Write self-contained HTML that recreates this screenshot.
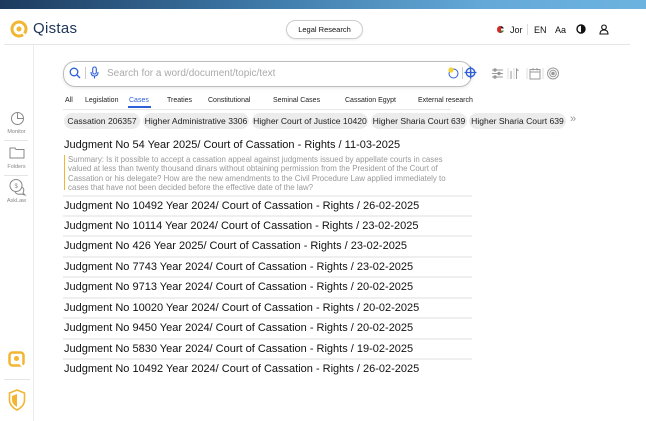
<!DOCTYPE html>
<html><head><meta charset="utf-8"><style>
*{margin:0;padding:0;box-sizing:border-box}
body{width:646px;height:421px;background:#fff;font-family:"Liberation Sans",sans-serif;position:relative;overflow:hidden;color:#111}
.abs{position:absolute}
.topbar{left:0;top:0;width:646px;height:9px;background:linear-gradient(90deg,#1d3a5e 0%,#3e79a8 40%,#64a9d8 75%,#6db3e0 100%)}
.hline{left:4px;top:44px;width:626px;height:1px;background:#e6e6e6}
.vline{left:33px;top:45px;width:1px;height:376px;background:#ececec}
.logo{left:10px;top:20px}
.brand{left:33px;top:20px;font-size:15px;color:#1d3557;letter-spacing:.3px}
.lr{left:286px;top:20px;width:77px;height:19px;border:1px solid #ccc;border-radius:10px;font-size:7.5px;text-align:center;line-height:17px;box-shadow:0 1px 2px rgba(0,0,0,.08)}
.hr{top:25px;font-size:9px}
.search{left:63px;top:61px;width:409px;height:26px;border:1px solid #bdbdbd;border-radius:12px;box-shadow:0 1px 3px rgba(0,0,0,.1)}
.ph{left:107px;top:68px;font-size:10px;color:#aaa}
.tabs{top:97px;font-size:7px;color:#222}
.tabline{left:63px;top:109px;width:388px;height:1px;background:#e8e8e8}
.chip{top:113px;height:16px;border-radius:8px;background:#ececec;font-size:8.6px;line-height:16px;text-align:center;color:#222;white-space:nowrap;overflow:hidden}
.t{left:64px;font-size:11px;color:#111;white-space:nowrap}
.sep{left:63px;width:409px;height:2px;background:#efefef}
.sum{left:68px;top:155px;width:378px;font-size:7.9px;line-height:9.4px;color:#999}
.side{font-size:5.5px;color:#888;text-align:center;width:33px;left:0}
</style></head><body>
<div class="abs topbar"></div>
<svg class="abs logo" width="18" height="18" viewBox="0 0 18 18"><circle cx="9" cy="9" r="7" fill="none" stroke="#f2b632" stroke-width="3"/><circle cx="9" cy="9" r="2.5" fill="#f2b632"/><path d="M13 13 L16 17" stroke="#fff" stroke-width="2"/></svg>
<div class="abs brand">Qistas</div>
<div class="abs lr">Legal Research</div>
<div class="abs" style="left:497px;top:26px;width:7px;height:7px;border-radius:50%;background:linear-gradient(#222 33%,#fff 33% 66%,#2a8a3a 66%)"><div style="width:4px;height:7px;background:#d62828;border-radius:4px 0 0 4px"></div></div>
<div class="abs hr" style="left:510px">Jor</div>
<div class="abs" style="left:527px;top:24px;width:1px;height:11px;background:#ddd"></div>
<div class="abs hr" style="left:534px">EN</div>
<div class="abs hr" style="left:555px">Aa</div>
<svg class="abs" style="left:576px;top:24px" width="10" height="10" viewBox="0 0 10 10"><circle cx="5" cy="5" r="4" fill="none" stroke="#111" stroke-width="1.4"/><path d="M5 1 A4 4 0 0 1 5 9Z" fill="#111"/></svg>
<svg class="abs" style="left:599px;top:24px" width="10" height="11" viewBox="0 0 10 11"><circle cx="5" cy="3.3" r="2.3" fill="none" stroke="#111" stroke-width="1.1"/><path d="M1 10 Q1 6 5 6 Q9 6 9 10Z" fill="none" stroke="#111" stroke-width="1.1"/></svg>
<div class="abs hline"></div>
<div class="abs vline"></div>

<svg class="abs" style="left:10px;top:111px" width="15" height="15" viewBox="0 0 15 15"><circle cx="7.5" cy="7.5" r="6" fill="none" stroke="#888" stroke-width="1"/><path d="M7.5 1.5V7.5H13.5" fill="none" stroke="#888" stroke-width="1"/></svg>
<div class="abs side" style="top:129px">Monitor</div>
<div class="abs" style="left:4px;top:140px;width:24px;height:1px;background:#e5e5e5"></div>
<svg class="abs" style="left:9px;top:146px" width="16" height="13" viewBox="0 0 16 13"><path d="M1 2H6L7 3.5H15V12H1Z" fill="none" stroke="#888" stroke-width="1"/></svg>
<div class="abs side" style="top:164px">Folders</div>
<div class="abs" style="left:4px;top:175px;width:24px;height:1px;background:#e5e5e5"></div>
<svg class="abs" style="left:8px;top:178px" width="19" height="18" viewBox="0 0 19 18"><circle cx="8" cy="7.5" r="6" fill="none" stroke="#888"/><path d="M14 9 Q17 11 15 15 L17 17 L13 16 Q9 17 7 14" fill="none" stroke="#888"/><text x="6.5" y="10" font-size="6" fill="#888">$</text></svg>
<div class="abs side" style="top:198px">AskLaw</div>
<svg class="abs" style="left:8px;top:351px" width="17" height="16" viewBox="0 0 17 16"><rect x="1.5" y="1.5" width="14" height="13" rx="3" fill="none" stroke="#f2b632" stroke-width="2.5"/><circle cx="8.5" cy="7.5" r="2.5" fill="#f2b632"/><path d="M12 13L15 15" stroke="#fff" stroke-width="2"/></svg>
<div class="abs" style="left:4px;top:379px;width:26px;height:1px;background:#e5e5e5"></div>
<svg class="abs" style="left:8px;top:389px" width="18" height="22" viewBox="0 0 18 22"><path d="M9 1 L16.5 4 V11 Q16.5 17 9 21 Q1.5 17 1.5 11 V4Z" fill="none" stroke="#f2b632" stroke-width="1.6"/><path d="M9 5 V18 Q4 15 4 11 V7Z" fill="#f2b632"/></svg>

<div class="abs search"></div>
<svg class="abs" style="left:69px;top:67px" width="12" height="12" viewBox="0 0 12 12"><circle cx="5" cy="5" r="3.8" fill="none" stroke="#2d5fd8" stroke-width="1.3"/><path d="M8 8L11 11" stroke="#2d5fd8" stroke-width="1.3"/></svg>
<div class="abs" style="left:85px;top:67px;width:1px;height:12px;background:#ccc"></div>
<svg class="abs" style="left:90px;top:66px" width="9" height="13" viewBox="0 0 9 13"><rect x="2.7" y="1" width="3.6" height="7" rx="1.8" fill="none" stroke="#2d5fd8" stroke-width="1.1"/><path d="M1 6Q1 10 4.5 10Q8 10 8 6M4.5 10V12.5" fill="none" stroke="#2d5fd8" stroke-width="1.1"/></svg>
<div class="abs ph">Search for a word/document/topic/text</div>
<svg class="abs" style="left:447px;top:66px" width="13" height="14" viewBox="0 0 13 14"><circle cx="6.5" cy="7.5" r="4.5" fill="none" stroke="#2d5fd8" stroke-width="1"/><circle cx="4" cy="4" r="2.6" fill="#f6d232"/></svg>
<div class="abs" style="left:462px;top:67px;width:1px;height:12px;background:#ccc"></div>
<svg class="abs" style="left:464px;top:66px" width="13" height="13" viewBox="0 0 13 13"><circle cx="6.5" cy="6.5" r="4.3" fill="none" stroke="#2d5fd8" stroke-width="1.4"/><path d="M6.5 0.5V12.5M0.5 6.5H12.5" stroke="#2d5fd8" stroke-width="1.2"/></svg>
<svg class="abs" style="left:491px;top:67px" width="75" height="13" viewBox="0 0 75 13" stroke="#999" fill="none" stroke-width="1"><path d="M1 3H12M1 6.5H12M1 10H12"/><circle cx="4" cy="3" r="1.2" fill="#999"/><circle cx="8" cy="6.5" r="1.2" fill="#999"/><circle cx="4" cy="10" r="1.2" fill="#999"/><path d="M17 1V12M23 1V12" stroke="#ddd"/><path d="M20 4V12M25.5 12V2L27.5 4" /><path d="M36 1V12" stroke="#ddd"/><rect x="39" y="2.5" width="10" height="9.5"/><path d="M39 5H49M42 1V3.5M46 1V3.5"/><path d="M52 1V12" stroke="#ddd"/><circle cx="62" cy="6.5" r="5.5"/><circle cx="62" cy="6.5" r="3.3"/><circle cx="62" cy="6.5" r="1.3" fill="#999"/></svg>

<div class="abs tabs" style="left:65px">All</div>
<div class="abs tabs" style="left:85px">Legislation</div>
<div class="abs tabs" style="left:129px;color:#2d5fd8">Cases</div>
<div class="abs" style="left:128px;top:106px;width:23px;height:1.5px;background:#2d5fd8"></div>
<div class="abs tabs" style="left:167px">Treaties</div>
<div class="abs tabs" style="left:208px">Constitutional</div>
<div class="abs tabs" style="left:273px">Seminal Cases</div>
<div class="abs tabs" style="left:345px">Cassation Egypt</div>
<div class="abs tabs" style="left:418px">External research</div>
<div class="abs tabline"></div>

<div class="abs chip" style="left:64px;width:76px">Cassation 206357</div>
<div class="abs chip" style="left:143px;width:106px">Higher Administrative 3306</div>
<div class="abs chip" style="left:252px;width:116px">Higher Court of Justice 10420</div>
<div class="abs chip" style="left:371px;width:96px">Higher Sharia Court 639</div>
<div class="abs chip" style="left:469px;width:97px">Higher Sharia Court 639</div>
<div class="abs" style="left:570px;top:113px;font-size:11px;color:#999">»</div>

<div class="abs t" style="top:139px">Judgment No 54 Year 2025/ Court of Cassation - Rights / 11-03-2025</div>
<div class="abs" style="left:64px;top:155px;width:1px;height:35px;background:#f2b632"></div>
<div class="abs sum">Summary: Is it possible to accept a cassation appeal against judgments issued by appellate courts in cases<br>valued at less than twenty thousand dinars without obtaining permission from the President of the Court of<br>Cassation or his delegate? How are the new amendments to the Civil Procedure Law applied immediately to<br>cases that have not been decided before the effective date of the law?</div>
<div class="abs sep" style="top:195px"></div>
<div class="abs t" style="top:200px">Judgment No 10492 Year 2024/ Court of Cassation - Rights / 26-02-2025</div>
<div class="abs sep" style="top:215px"></div>
<div class="abs t" style="top:220px">Judgment No 10114 Year 2024/ Court of Cassation - Rights / 23-02-2025</div>
<div class="abs sep" style="top:235px"></div>
<div class="abs t" style="top:240px">Judgment No 426 Year 2025/ Court of Cassation - Rights / 23-02-2025</div>
<div class="abs sep" style="top:256px"></div>
<div class="abs t" style="top:261px">Judgment No 7743 Year 2024/ Court of Cassation - Rights / 23-02-2025</div>
<div class="abs sep" style="top:276px"></div>
<div class="abs t" style="top:281px">Judgment No 9713 Year 2024/ Court of Cassation - Rights / 20-02-2025</div>
<div class="abs sep" style="top:297px"></div>
<div class="abs t" style="top:302px">Judgment No 10020 Year 2024/ Court of Cassation - Rights / 20-02-2025</div>
<div class="abs sep" style="top:317px"></div>
<div class="abs t" style="top:322px">Judgment No 9450 Year 2024/ Court of Cassation - Rights / 20-02-2025</div>
<div class="abs sep" style="top:338px"></div>
<div class="abs t" style="top:343px">Judgment No 5830 Year 2024/ Court of Cassation - Rights / 19-02-2025</div>
<div class="abs sep" style="top:358px"></div>
<div class="abs t" style="top:363px">Judgment No 10492 Year 2024/ Court of Cassation - Rights / 26-02-2025</div>
</body></html>
